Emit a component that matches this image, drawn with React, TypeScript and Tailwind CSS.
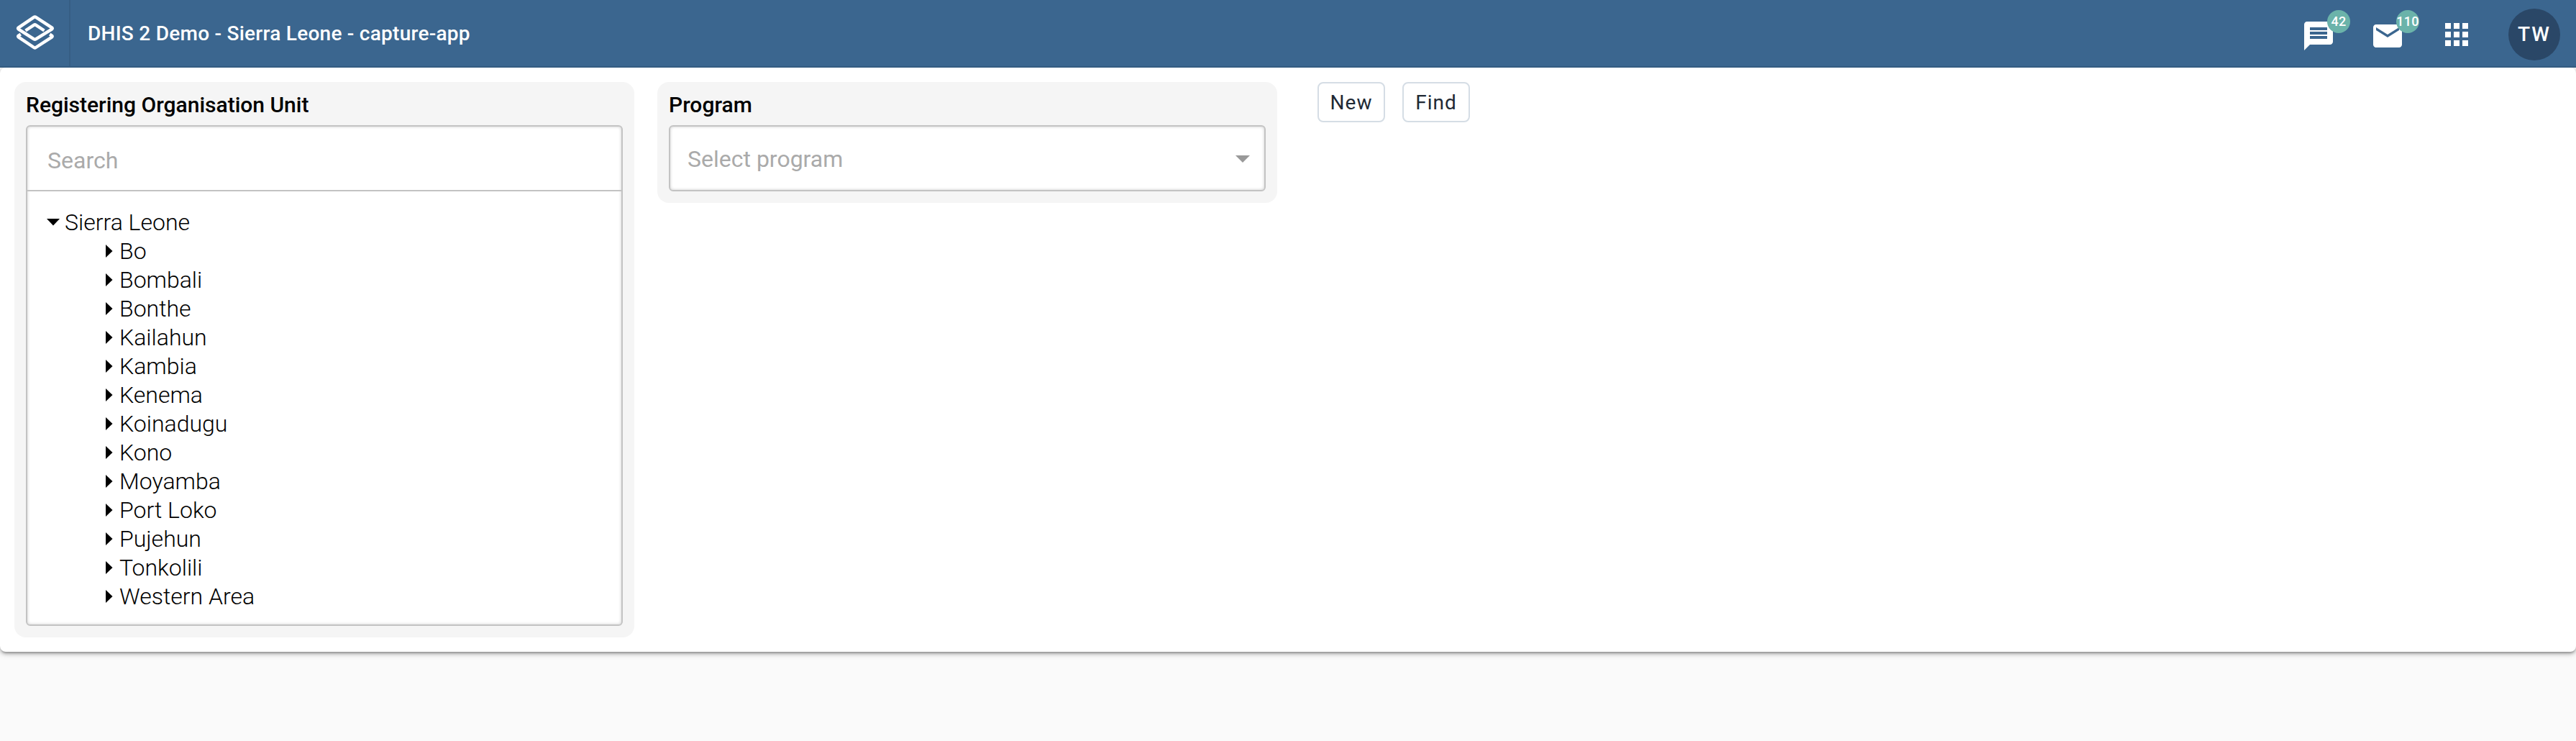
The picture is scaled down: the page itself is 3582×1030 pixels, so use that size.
import React from "react";

const districts = [
  "Bo", "Bombali", "Bonthe", "Kailahun", "Kambia", "Kenema", "Koinadugu",
  "Kono", "Moyamba", "Port Loko", "Pujehun", "Tonkolili", "Western Area",
];

function Logo() {
  return (
    <svg className="h-[52px] w-[56px]" viewBox="20 19 56 52" fill="none" stroke="#fff" strokeWidth="4.4" strokeLinejoin="round">
      <path d="M47.2 23.9q1.3-.9 2.6 0L72 38.4q1.6 1.1 0 2.2L49.8 54.3q-1.3.8-2.6 0L25.8 40.6q-1.6-1.1 0-2.2z" />
      <path d="M35.5 42.5L47.4 34.7q1.1-.7 2.2 0L61.5 42.5" />
      <path d="M28.8 47.6L25.8 49.5q-1.4 1.1 0 2.1L47.2 66q1.3.9 2.6 0L72 51.6q1.4-1 0-2.1L69.2 47.6" />
    </svg>
  );
}

function Badge({ children }: { children: string }) {
  return (
    <span className="absolute -top-3 left-9 flex h-8 w-8 items-center justify-center rounded-full bg-[#6bb3aa] text-[18px] leading-none font-medium tracking-[0.3px] text-white">
      {children}
    </span>
  );
}

function Header() {
  return (
    <header className="relative z-10 flex h-[94px] items-stretch border-b-2 border-[#345c81] bg-[#3b668f] text-white">
      <div className="flex w-[98px] items-start border-r-2 border-[#365e84] pt-[19px] pl-5">
        <Logo />
      </div>
      <h1 className="flex flex-1 items-center pt-[2px] pl-[24px] text-[28px] leading-none font-medium tracking-[0.26px]">
        DHIS 2 Demo - Sierra Leone - capture-app
      </h1>
      <div className="flex items-start pr-[22px]">
        <div className="relative mt-[26px] mr-12 h-12 w-12">
          <svg viewBox="0 0 24 24" className="h-12 w-12" fill="#fff">
            <path d="M20 2H4c-1.1 0-1.99.9-1.99 2L2 22l4-4h14c1.1 0 2-.9 2-2V4c0-1.1-.9-2-2-2zm-2 12H6v-2h12v2zm0-3H6V9h12v2zm0-3H6V6h12v2z" />
          </svg>
          <Badge>42</Badge>
        </div>
        <div className="relative mt-[26px] mr-12 h-12 w-12">
          <svg viewBox="0 0 24 24" className="h-12 w-12" fill="#fff">
            <path d="M20 4H4c-1.1 0-1.99.9-1.99 2L2 18c0 1.1.9 2 2 2h16c1.1 0 2-.9 2-2V6c0-1.1-.9-2-2-2zm0 4l-8 5-8-5V6l8 5 8-5v2z" />
          </svg>
          <Badge>110</Badge>
        </div>
        <svg viewBox="0 0 24 24" className="mt-6 mr-12 h-12 w-12" fill="#fff">
          <path d="M4 8h4V4H4v4zm6 12h4v-4h-4v4zm-6 0h4v-4H4v4zm0-6h4v-4H4v4zm6 0h4v-4h-4v4zm6-10v4h4V4h-4zm-6 4h4V4h-4v4zm6 6h4v-4h-4v4zm0 6h4v-4h-4v4z" />
        </svg>
        <div className="mt-3 flex h-[72px] w-[72px] items-center justify-center rounded-full bg-[#2a4767] text-[28px] leading-none font-medium tracking-[2px]">
          TW
        </div>
      </div>
    </header>
  );
}

function Panel({ title, children }: { title: string; children: React.ReactNode }) {
  return (
    <section className="w-[862px] rounded-[16px] bg-[#f5f5f5] p-4">
      <h2 className="h-11 pt-[2px] text-[30px] leading-[28px] font-medium text-black">{title}</h2>
      <div className="overflow-hidden rounded-[6px] border-2 border-[#c3c3c3] bg-white shadow-[inset_0_0_4px_rgba(0,0,0,0.2)]">
        {children}
      </div>
    </section>
  );
}

export default function App() {
  return (
    <div className="h-[1030px] bg-[#fafafa] font-['Roboto',sans-serif]">
      <Header />
      <main className="flex h-[812px] items-start rounded-[8px] bg-white pt-5 pl-5 shadow-[0_2px_10px_rgba(0,0,0,0.22),0_3px_4px_rgba(0,0,0,0.18),0_4px_2px_-2px_rgba(0,0,0,0.14)]">
        <Panel title="Registering Organisation Unit">
          <div className="flex h-[90px] items-center border-b-2 border-[#c3c3c3] pt-[5px] pl-7 text-[32px] text-[#aaaaaa]">
            Search
          </div>
          <div className="h-[602px] pt-[23px] pl-[27px] text-[32px] leading-[40px] font-light text-black">
            <div className="flex h-10 items-center">
              <svg className="mr-[7px] h-[10px] w-[18px]" viewBox="0 0 18 10"><path d="M0 0h18L9 9.5z" /></svg>
              Sierra Leone
            </div>
            {districts.map((name) => (
              <div key={name} className="flex h-10 items-center pl-[82px]">
                <svg className="mr-[9px] h-[18px] w-[10px]" viewBox="0 0 10 18"><path d="M0 0v18l9.5-9z" /></svg>
                {name}
              </div>
            ))}
          </div>
        </Panel>
        <div className="ml-8">
          <Panel title="Program">
            <div className="flex h-[88px] items-center justify-between pt-px pr-5 pl-6 text-[32px] text-[#aaaaaa]">
              Select program
              <svg className="h-[10px] w-[20px]" viewBox="0 0 20 10" fill="#999"><path d="M0 0h20L10 10z" /></svg>
            </div>
          </Panel>
        </div>
        <div className="ml-14 flex gap-6">
          {["New", "Find"].map((label) => (
            <button key={label} className="h-14 w-[94px] rounded-[8px] border-2 border-[#d5dde5] bg-white pt-px text-[28px] leading-none tracking-[1px] text-[#212934]">
              {label}
            </button>
          ))}
        </div>
      </main>
    </div>
  );
}
